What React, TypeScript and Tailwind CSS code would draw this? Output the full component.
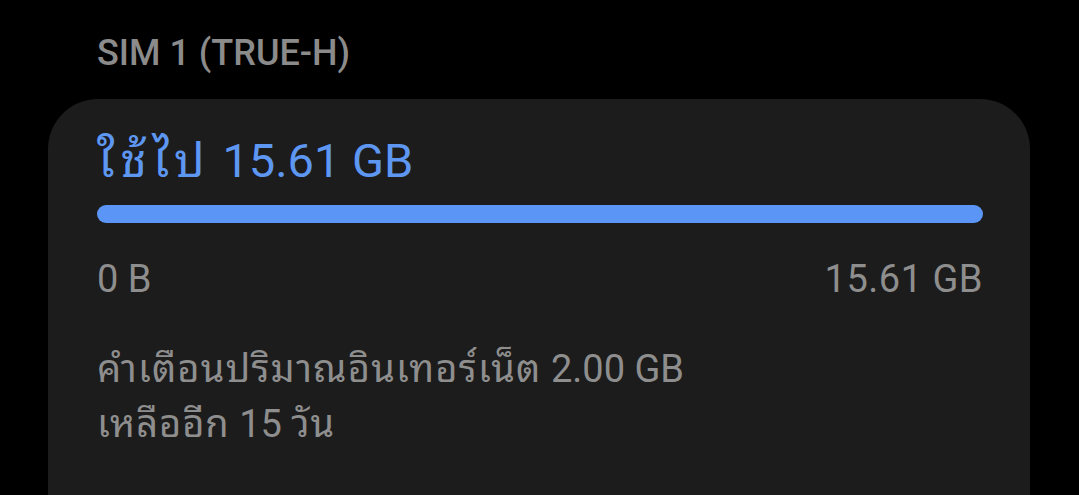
import React from "react";

export default function App() {
  const font = {
    fontFamily:
      'Roboto, "Noto Sans Thai Looped", "Noto Sans Thai UI", Loma, Garuda, "Tlwg Typo", "Noto Sans", "Noto Sans Thai", sans-serif',
  };
  return (
    <div className="w-[1079px] h-[495px] overflow-hidden bg-black" style={font}>
      <div className="pl-[97px] pt-[35px] text-[36px] leading-[36px] font-medium text-[#8b8b8b]">
        SIM 1 (TRUE-H)
      </div>
      <div className="mt-[28px] ml-[48px] w-[982px] h-[500px] rounded-[50px] bg-[#1c1c1c] pl-[49px] pr-[47px] pt-[34px]">
        <div className="text-[47px] leading-[56px] text-[#5e97f2]">
          <span className="tracking-[6px]">ใช้ไป</span> 15.61 GB
        </div>
        <div className="mt-[16px] h-[18px] w-full rounded-full bg-[#5b95f5]" />
        <div className="mt-[33px] flex justify-between text-[38px] leading-[46px] text-[#8e8e8e]">
          <span>0 B</span>
          <span className="tracking-[0.5px]">15.61 GB</span>
        </div>
        <div className="mt-[40px] text-[38px] leading-[55px] text-[#8e8e8e]">
          <div>
            <span className="tracking-[1.2px]">คำเตือนปริมาณอินเทอร์เน็ต</span> 2.00 GB
          </div>
          <div>
            <span className="tracking-[1px]">เหลืออีก</span> 15 <span className="tracking-[1px]">วัน</span>
          </div>
        </div>
      </div>
    </div>
  );
}
